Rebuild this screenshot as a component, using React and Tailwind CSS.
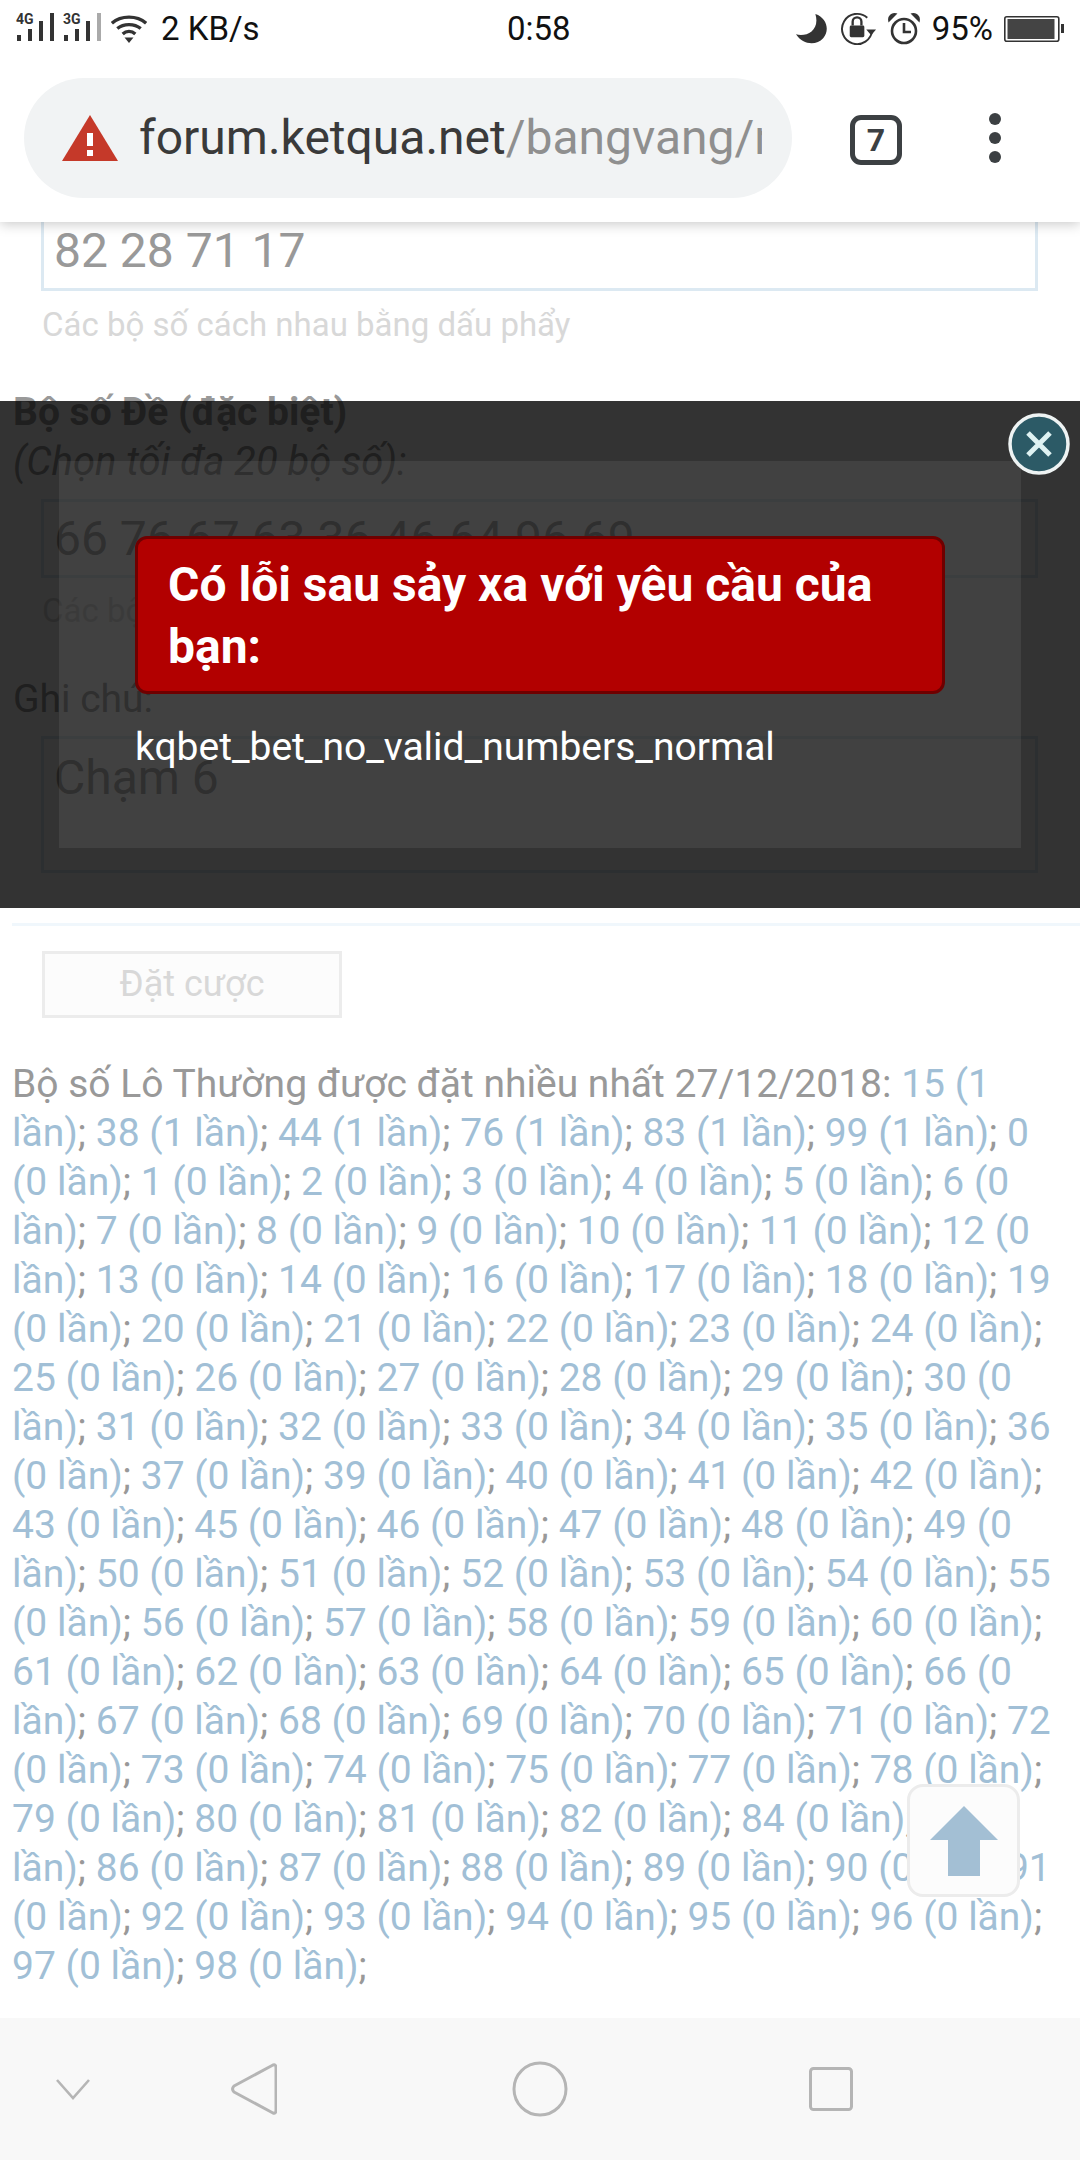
import React from "react";

const top = [15, 38, 44, 76, 83, 99];
const rest = [];
for (let i = 0; i < 99; i++) if (!top.includes(i)) rest.push(i);
const items = [...top.map((n) => [n, 1]), ...rest.map((n) => [n, 0])];

function Signal({ label, dim }) {
  return (
    <div className="relative w-[45px] h-[32px]">
      <span className="absolute left-0 top-[-1px] text-[14px] leading-[14px] font-bold text-[#333]">{label}</span>
      <svg width="45" height="32" viewBox="0 0 45 32" className="absolute left-0 top-0">
        <rect x="1" y="22" width="4" height="6" fill="#333" />
        <rect x="12" y="16" width="4" height="12" fill="#333" />
        <rect x="23" y="8" width="4" height="20" fill="#333" />
        <rect x="34" y="0" width="4" height="28" fill={dim ? "#aaa" : "#333"} />
      </svg>
    </div>
  );
}

function StatusBar() {
  return (
    <div className="relative z-20 flex items-center h-[58px] pl-[16px] pr-[16px] text-[33px] text-[#111] bg-white">
      <div className="flex items-center gap-[2px]">
        <Signal label="4G" />
        <Signal label="3G" dim />
      </div>
      <svg width="36" height="29" viewBox="0 0 40 32" className="ml-[3px]">
        <path d="M1 9 C11 0 29 0 39 9 M7 15 C14 9 26 9 33 15 M13 21 C17 17 23 17 27 21" fill="none" stroke="#333" strokeWidth="3.6" />
        <path d="M15 25 L25 25 L20 31 Z" fill="#333" />
      </svg>
      <span className="ml-[14px]">2 KB/s</span>
      <span className="absolute left-[507px]">0:58</span>
      <div className="ml-auto flex items-center">
        <svg width="33" height="33" viewBox="0 0 34 34">
          <path d="M21 1 C33 5 36 18 29 26 C22 34 8 33 1 22 C12 25 26 18 21 1 Z" fill="#333" />
        </svg>
        <svg width="37" height="37" viewBox="0 0 38 38" className="ml-[12px]">
          <path d="M33 20 A15.5 15.5 0 1 1 28 7" fill="none" stroke="#333" strokeWidth="2" />
          <path d="M27 19 L37 19 L32 25 Z" fill="#333" />
          <rect x="10" y="15" width="15" height="12" rx="1.5" fill="#333" />
          <path d="M13 15 V11 A4.5 4.5 0 0 1 22 11 V15" fill="none" stroke="#333" strokeWidth="2.4" />
        </svg>
        <svg width="32" height="34" viewBox="0 0 32 34" className="ml-[11px]">
          <circle cx="16" cy="19" r="12" fill="none" stroke="#333" strokeWidth="2.6" />
          <path d="M16 11 V20 H23" fill="none" stroke="#333" strokeWidth="2.6" />
          <path d="M1 9 L8 2 C4 1 0 4 1 9 Z M31 9 L24 2 C28 1 32 4 31 9 Z" fill="#333" stroke="#333" strokeWidth="1.5" />
        </svg>
        <span className="ml-[12px]">95%</span>
        <svg width="60" height="26" viewBox="0 0 60 26" className="ml-[11px]">
          <rect x="0.8" y="0.8" width="54" height="24.4" rx="2" fill="none" stroke="#333" strokeWidth="1.6" />
          <rect x="3.5" y="3" width="47" height="20" fill="#444" />
          <rect x="57" y="8" width="3" height="9" fill="#333" />
        </svg>
      </div>
    </div>
  );
}

function Toolbar() {
  return (
    <div className="relative z-10 h-[164px] bg-white flex items-start shadow-[0_2px_12px_rgba(0,0,0,0.22)]">
      <div className="ml-[24px] mt-[20px] w-[768px] h-[120px] rounded-full bg-[#f1f3f4] flex items-center pl-[38px] pr-[30px]">
        <svg width="56" height="48" viewBox="0 0 56 48" className="shrink-0">
          <path d="M28 1 L56 47 H0 Z" fill="#c53929" />
          <rect x="25" y="19" width="6" height="13" fill="#fff" />
          <rect x="25" y="36" width="6" height="6" fill="#fff" />
        </svg>
        <div className="ml-[21px] overflow-hidden whitespace-nowrap text-[48px] leading-[60px] text-[#3a3a3a]">
          forum.ketqua.net<span className="text-[#8f8f8f]">/bangvang/new</span>
        </div>
      </div>
      <div className="ml-[58px] mt-[57px] w-[52px] h-[50px] border-[5px] border-[#3c4043] rounded-[11px] flex items-center justify-center text-[32px] font-bold text-[#3c4043]">
        7
      </div>
      <div className="ml-[87px] mt-[55px] flex flex-col gap-[7px]">
        <div className="w-[12px] h-[12px] rounded-full bg-[#3c4043]" />
        <div className="w-[12px] h-[12px] rounded-full bg-[#3c4043]" />
        <div className="w-[12px] h-[12px] rounded-full bg-[#3c4043]" />
      </div>
    </div>
  );
}

function Field({ h, children }) {
  return (
    <div className={`ml-[41px] mr-[42px] border-[3px] pl-[10px] text-[48px] text-[#999] flex ${h}`}>
      {children}
    </div>
  );
}

function Page() {
  return (
    <div className="flex-1 -mt-[12px] bg-white overflow-hidden text-[39px] leading-[49px] text-[#999]">
      <Field h="h-[81px] border-[#dce9f2] items-center">82 28 71 17</Field>
      <div className="mt-[9px] ml-[42px] text-[33px] text-[#d8d8d8]">Các bộ số cách nhau bằng dấu phẩy</div>
      <div className="mt-[39px] ml-[13px] font-bold">Bộ số Đề (đặc biệt)</div>
      <div className="ml-[13px] italic text-[40px]">(Chọn tối đa 20 bộ số):</div>
      <div className="mt-[13px]">
        <Field h="h-[79px] border-[#dce9f2] items-center">66 76 67 63 36 46 64 96 69</Field>
      </div>
      <div className="mt-[8px] ml-[42px] text-[33px] text-[#d8d8d8]">Các bộ số cách nhau bằng dấu phẩy</div>
      <div className="mt-[40px] ml-[13px]">Ghi chú:</div>
      <div className="mt-[12px]">
        <Field h="h-[137px] border-[#dce9f2] items-start pt-[14px]">Chạm 6</Field>
      </div>
      <div className="mt-[50px] ml-[12px] h-[3px] bg-[#f0f7fc]" />
      <div className="mt-[25px] ml-[42px] w-[300px] h-[67px] border-[3px] border-[#ececec] bg-[#fcfcfc] flex items-center justify-center text-[36px] text-[#d8d8d8]">
        Đặt cược
      </div>
      <div className="mt-[42px] ml-[12px] mr-[15px]">
        Bộ số Lô Thường được đặt nhiều nhất 27/12/2018:{" "}
        {items.map(([n, c]) => (
          <React.Fragment key={n}>
            <span className="text-[#a1bfd6]">{n} ({c} lần)</span>;{" "}
          </React.Fragment>
        ))}
      </div>
    </div>
  );
}

function Overlay() {
  return (
    <div className="absolute left-0 right-0 top-[401px] h-[507px] z-20 bg-black/80">
      <div className="absolute left-[59px] top-[60px] w-[962px] h-[387px] bg-white/[0.07]" />
      <div className="absolute left-[135px] top-[135px] w-[810px] h-[158px] rounded-[12px] border-[3px] border-[#6f0000] bg-[#b20000] pl-[30px] pr-[30px] pt-[15px] text-[48px] leading-[62px] font-bold text-white">
        Có lỗi sau sảy xa với yêu cầu của bạn:
      </div>
      <div className="absolute left-[135px] top-[322px] text-[39px] leading-[49px] text-white">
        kqbet_bet_no_valid_numbers_normal
      </div>
      <svg width="64" height="64" viewBox="0 0 64 64" className="absolute left-[1007px] top-[11px] blur-[0.6px]">
        <circle cx="32" cy="32" r="29" fill="#2c5a66" stroke="#eef3f3" strokeWidth="3.5" />
        <path d="M21 21 L43 43 M43 21 L21 43" stroke="#dff2f2" strokeWidth="5" />
      </svg>
    </div>
  );
}

function BackToTop() {
  return (
    <div className="absolute left-[907px] top-[1784px] w-[113px] h-[113px] z-10 rounded-[16px] border-[3px] border-[#ececec] bg-[#fcfcfc] flex items-center justify-center">
      <svg width="68" height="70" viewBox="0 0 68 70">
        <path d="M34 0 L68 34 H50 V70 H18 V34 H0 Z" fill="#a3bfd4" />
      </svg>
    </div>
  );
}

function NavBar() {
  return (
    <div className="relative h-[142px] bg-[#f8f8f8] flex items-center">
      <svg width="34" height="22" viewBox="0 0 34 22" className="ml-[56px]">
        <path d="M1 2 L17 20 L33 2" fill="none" stroke="#b5b5b5" strokeWidth="2.6" />
      </svg>
      <svg width="46" height="54" viewBox="0 0 46 54" className="ml-[141px]">
        <path d="M42 3 Q45 2 45 6 V48 Q45 52 42 51 L3 30 Q0 27 3 24 Z" fill="none" stroke="#b5b5b5" strokeWidth="3" strokeLinejoin="round" />
      </svg>
      <svg width="56" height="56" viewBox="0 0 56 56" className="ml-[235px]">
        <circle cx="28" cy="28" r="26" fill="none" stroke="#b5b5b5" strokeWidth="3" />
      </svg>
      <svg width="44" height="44" viewBox="0 0 44 44" className="ml-[241px]">
        <rect x="1.5" y="1.5" width="41" height="41" rx="3" fill="none" stroke="#b5b5b5" strokeWidth="3" />
      </svg>
    </div>
  );
}

export default function App() {
  return (
    <div className="relative w-[1080px] h-[2160px] overflow-hidden bg-white flex flex-col font-['Roboto',sans-serif]">
      <StatusBar />
      <Toolbar />
      <Page />
      <NavBar />
      <Overlay />
      <BackToTop />
    </div>
  );
}
